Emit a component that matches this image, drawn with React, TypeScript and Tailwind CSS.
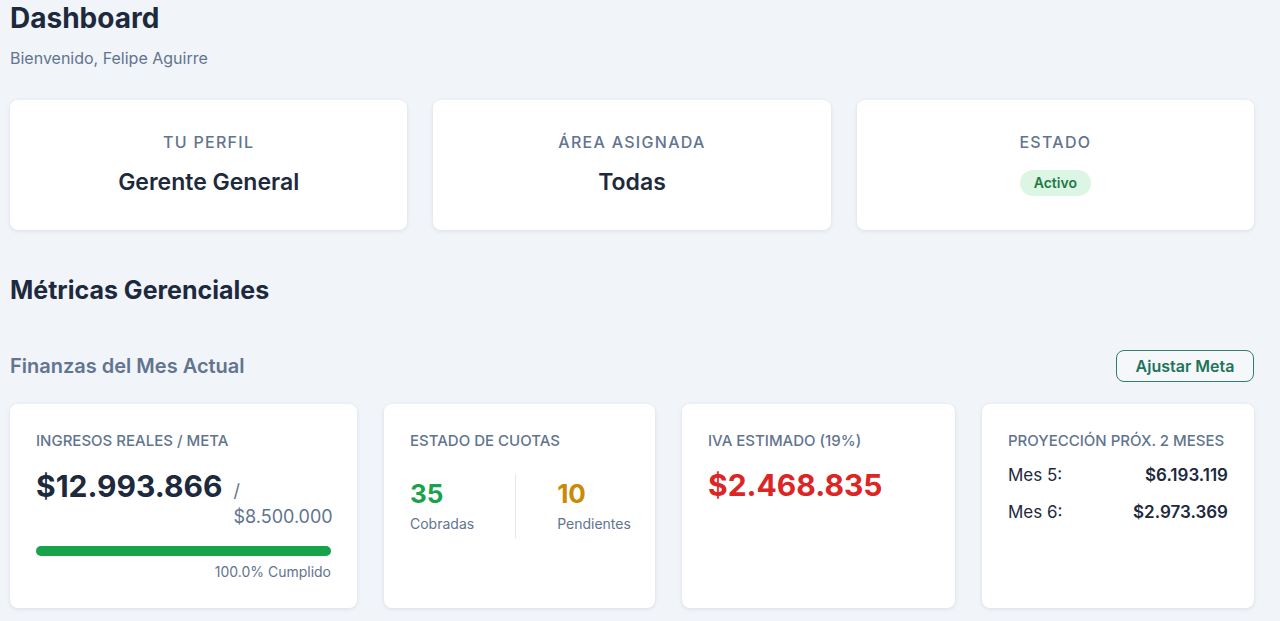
import React from 'react';

interface InfoCardProps {
  label: string;
  children: React.ReactNode;
}

const InfoCard = ({ label, children }: InfoCardProps) => (
  <div className="bg-white h-[130px] rounded-lg shadow-[0_1px_4px_rgba(15,23,42,0.10)] flex flex-col items-center pt-[32px]">
    <p className="text-[16px] font-medium tracking-[0.08em] uppercase text-slate-500 leading-5">{label}</p>
    <div className="mt-[16px]">{children}</div>
  </div>
);

const MetricCard = ({ label, children }: InfoCardProps) => (
  <div className="bg-white h-[204px] rounded-lg shadow-[0_1px_4px_rgba(15,23,42,0.10)] px-[26px] pt-[29px] min-w-0">
    <p className="text-[15px] font-medium uppercase text-slate-500 leading-4 whitespace-nowrap">{label}</p>
    {children}
  </div>
);

const App = () => {
  const proyeccion = [
    { mes: 'Mes 5:', valor: '$6.193.119' },
    { mes: 'Mes 6:', valor: '$2.973.369' },
  ];

  return (
    <div className="min-h-[621px] bg-[#f1f4f9] font-['Inter','Liberation_Sans',sans-serif] text-slate-800">
      <div className="w-[1244px] ml-[10px]">
        <h1 className="text-[28px] font-bold leading-9">Dashboard</h1>
        <p className="text-[16px] text-slate-500 mt-[10px] leading-6">Bienvenido, Felipe Aguirre</p>

        <div className="grid grid-cols-3 gap-[26px] mt-[30px]">
          <InfoCard label="Tu Perfil">
            <p className="text-[23px] font-semibold leading-7">Gerente General</p>
          </InfoCard>
          <InfoCard label="Área Asignada">
            <p className="text-[23px] font-semibold leading-7">Todas</p>
          </InfoCard>
          <InfoCard label="Estado">
            <span className="inline-block mt-[2px] bg-[#dcf5e4] text-[#1f7a45] text-[14px] font-semibold px-[14px] py-[4px] rounded-full leading-[18px]">
              Activo
            </span>
          </InfoCard>
        </div>

        <h2 className="text-[25px] font-bold leading-8 mt-[44px]">Métricas Gerenciales</h2>

        <div className="flex items-center justify-between mt-[44px]">
          <h3 className="text-[20px] font-semibold text-slate-500 leading-7">Finanzas del Mes Actual</h3>
          <button className="border border-[#2f7f6d] text-[#1f7359] text-[16px] font-semibold rounded-lg h-[32px] w-[138px] bg-white/30">
            Ajustar Meta
          </button>
        </div>

        <div className="grid grid-cols-[347px_minmax(0,271fr)_minmax(0,273fr)_minmax(0,272fr)] gap-[27px] mt-[22px]">
          <MetricCard label="Ingresos Reales / Meta">
            <div className="flex items-baseline gap-[11px] mt-[17px]">
              <span className="text-[30px] font-bold leading-10">$12.993.866</span>
              <span className="text-[18px] text-slate-500 leading-[26px]">/ $8.500.000</span>
            </div>
            <div className="h-[10px] rounded-full bg-slate-200 mt-[16px]">
              <div className="h-full rounded-full bg-[#16a34a]" style={{ width: '100%' }} />
            </div>
            <p className="text-right text-[14px] text-slate-500 mt-[6px] leading-5">100.0% Cumplido</p>
          </MetricCard>

          <MetricCard label="Estado de Cuotas">
            <div className="flex mt-[25px]">
              <div className="pr-[41px] py-[4px]">
                <p className="text-[26px] font-bold text-[#16a34a] leading-8">35</p>
                <p className="text-[14px] text-slate-500 leading-5 mt-[4px]">Cobradas</p>
              </div>
              <div className="border-l border-slate-200 pl-[41px] py-[4px]">
                <p className="text-[26px] font-bold text-[#ca8a04] leading-8">10</p>
                <p className="text-[14px] text-slate-500 leading-5 mt-[4px]">Pendientes</p>
              </div>
            </div>
          </MetricCard>

          <MetricCard label="IVA Estimado (19%)">
            <p className="text-[30px] font-bold text-[#dc2626] leading-10 mt-[16px]">$2.468.835</p>
          </MetricCard>

          <MetricCard label="Proyección Próx. 2 Meses">
            <div className="mt-[15px] flex flex-col gap-[15px]">
              {proyeccion.map((p) => (
                <div key={p.mes} className="flex justify-between text-[17px] leading-[22px]">
                  <span className="text-slate-800">{p.mes}</span>
                  <span className="font-semibold">{p.valor}</span>
                </div>
              ))}
            </div>
          </MetricCard>
        </div>
      </div>
    </div>
  );
};

export default App;
